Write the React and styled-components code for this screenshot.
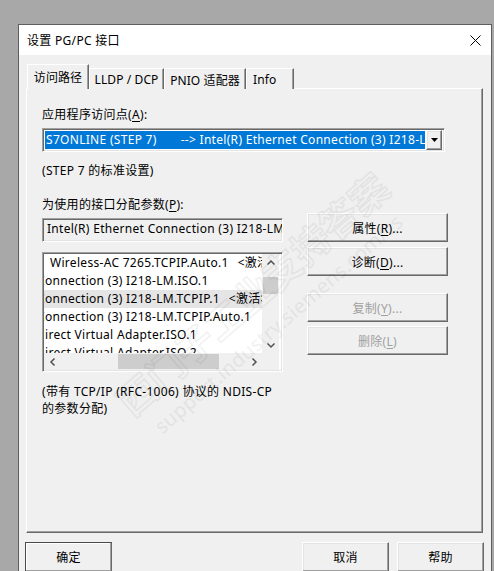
import React from "react";
import styled, { createGlobalStyle } from "styled-components";

const GlobalStyle = createGlobalStyle`
    html, body {
        margin: 0;
        padding: 0;
    }
    body {
        background: #a8a8a8;
        color: #000;
        font-family: "Noto Sans", "Noto Sans CJK SC", sans-serif;
        font-size: 12px;
        letter-spacing: 0.3px;
    }
    * {
        box-sizing: border-box;
    }
`;

const rows = [
    { text: "Wireless-AC 7265.TCPIP.Auto.1", tag: "<激活>", shift: 6 },
    { text: "Connection (3) I218-LM.ISO.1", shift: -7 },
    { text: "Connection (3) I218-LM.TCPIP.1", tag: "<激活>", shift: -7, selected: true },
    { text: "Connection (3) I218-LM.TCPIP.Auto.1", shift: -7 },
    { text: "irect Virtual Adapter.ISO.1", shift: 1 },
    { text: "irect Virtual Adapter.ISO.2", shift: 1 },
];

const Chevron = ({ dir }) => {
    const d = {
        up: "M0.5 5.5 L4 2 L7.5 5.5",
        down: "M0.5 2.5 L4 6 L7.5 2.5",
        left: "M5.5 0.5 L2 4 L5.5 7.5",
        right: "M2.5 0.5 L6 4 L2.5 7.5",
    }[dir];
    return (
        <svg width="8" height="8" viewBox="0 0 8 8">
            <path d={d} fill="none" stroke="#505050" strokeWidth="1.5" />
        </svg>
    );
};

const App = () => {
    return (
        <Screen>
            <GlobalStyle />
            <Dialog>
                <TitleBar>
                    <span>设置 PG/PC 接口</span>
                    <svg width="11" height="11" viewBox="0 0 11 11">
                        <path d="M0.5 0.5 L10.5 10.5 M10.5 0.5 L0.5 10.5" stroke="#000" strokeWidth="1" />
                    </svg>
                </TitleBar>
                <Body>
                    <TabStrip>
                        <Tab $active $w={62}>访问路径</Tab>
                        <Tab $w={75}>LLDP / DCP</Tab>
                        <Tab $w={82}>PNIO 适配器</Tab>
                        <Tab $w={48} $left>Info</Tab>
                    </TabStrip>
                    <Panel>
                        <Label>
                            应用程序访问点(<u>A</u>):
                        </Label>
                        <Combo>
                            <ComboValue>S7ONLINE (STEP 7)&nbsp;&nbsp;&nbsp;&nbsp;&nbsp;&nbsp;&nbsp;--&gt; Intel(R) Ethernet Connection (3) I218-LM</ComboValue>
                            <DropButton>
                                <svg width="7" height="4" viewBox="0 0 7 4">
                                    <path d="M0 0 L7 0 L3.5 4 Z" fill="#000" />
                                </svg>
                            </DropButton>
                        </Combo>
                        <Note>(STEP 7 的标准设置)</Note>
                        <Label $top={18}>
                            为使用的接口分配参数(<u>P</u>):
                        </Label>
                        <Split>
                            <LeftCol>
                                <TextField>Intel(R) Ethernet Connection (3) I218-LM.</TextField>
                                <ListBox>
                                    <Rows>
                                        {rows.map((r, i) => (
                                            <Row key={i} $selected={r.selected} $shift={r.shift}>
                                                {r.text}
                                                {r.tag && <Tag>{r.tag}</Tag>}
                                            </Row>
                                        ))}
                                    </Rows>
                                    <VScroll>
                                        <ArrowBox>
                                            <Chevron dir="up" />
                                        </ArrowBox>
                                        <VTrack>
                                            <VThumb />
                                        </VTrack>
                                        <ArrowBox>
                                            <Chevron dir="down" />
                                        </ArrowBox>
                                    </VScroll>
                                    <HScroll>
                                        <ArrowBox>
                                            <Chevron dir="left" />
                                        </ArrowBox>
                                        <HTrack>
                                            <HThumb />
                                        </HTrack>
                                        <ArrowBox>
                                            <Chevron dir="right" />
                                        </ArrowBox>
                                    </HScroll>
                                    <Corner />
                                </ListBox>
                            </LeftCol>
                            <RightCol>
                                <SideButton>
                                    属性(<u>R</u>)...
                                </SideButton>
                                <SideButton $top={5}>
                                    诊断(<u>D</u>)...
                                </SideButton>
                                <SideButton $top={17} disabled>
                                    复制(<u>Y</u>)...
                                </SideButton>
                                <SideButton $top={4} disabled>
                                    删除(<u>L</u>)
                                </SideButton>
                            </RightCol>
                        </Split>
                        <Footnote>
                            (带有 TCP/IP (RFC-1006) 协议的 NDIS-CP
                            <br />
                            的参数分配)
                        </Footnote>
                    </Panel>
                    <Footer>
                        <DialogButton $default>确定</DialogButton>
                        <RightButtons>
                            <DialogButton>取消</DialogButton>
                            <DialogButton>帮助</DialogButton>
                        </RightButtons>
                    </Footer>
                </Body>
            </Dialog>
            <Watermark>
                <WatermarkBig>西门子工业支持答案</WatermarkBig>
                <WatermarkSmall>support.industry.siemens.com/cs</WatermarkSmall>
            </Watermark>
        </Screen>
    );
};

const Screen = styled.div`
    height: 100vh;
    overflow: hidden;
    padding: 24px 0 0 18px;
    position: relative;
`;
const Dialog = styled.div`
    background: #f0f0f0;
    border: 1px solid #5e5e5e;
    display: flex;
    flex-direction: column;
    height: 570px;
    width: 474px;
`;
const TitleBar = styled.div`
    align-items: center;
    background: #fff;
    display: flex;
    height: 30px;
    justify-content: space-between;
    padding: 0 10px 0 8px;
`;
const Body = styled.div`
    display: flex;
    flex-direction: column;
    padding: 9px 8px 0 7px;
`;
const TabStrip = styled.div`
    align-items: flex-end;
    display: flex;
    height: 25px;
    margin-bottom: -1px;
    padding-left: 1px;
    position: relative;
    z-index: 1;
`;
const Tab = styled.div`
    align-items: center;
    background: #f0f0f0;
    border-left: 1px solid #fff;
    border-right: 1px solid #696969;
    border-top: 1px solid #fff;
    box-shadow: inset -1px 0 #a0a0a0;
    display: flex;
    height: ${(p) => (p.$active ? 25 : 21)}px;
    justify-content: ${(p) => (p.$left ? "flex-start" : "center")};
    letter-spacing: 0.1px;
    padding: ${(p) => (p.$left ? "0 0 0 6px" : "0")};
    padding-top: ${(p) => (p.$active ? 0 : 1)}px;
    white-space: nowrap;
    width: ${(p) => p.$w}px;
`;
const Panel = styled.div`
    border-bottom: 1px solid #696969;
    border-left: 1px solid #fff;
    border-right: 1px solid #696969;
    border-top: 1px solid #fff;
    box-shadow: inset -1px -1px #a0a0a0;
    display: flex;
    flex-direction: column;
    height: 445px;
    padding: 18px 0 0 15px;
    width: 457px;
`;
const Label = styled.div`
    line-height: 16px;
    margin-top: ${(p) => p.$top || 0}px;
    u {
        text-underline-offset: 2px;
    }
`;
const Sunken = styled.div`
    border-bottom: 1px solid #fff;
    border-left: 1px solid #a0a0a0;
    border-right: 1px solid #fff;
    border-top: 1px solid #a0a0a0;
    box-shadow: inset 1px 1px #696969, inset -1px -1px #e3e3e3;
`;
const Combo = styled(Sunken)`
    background: #fff;
    display: flex;
    height: 24px;
    margin-top: 5px;
    padding: 2px;
    width: 403px;
`;
const ComboValue = styled.div`
    background: #0078d7;
    color: #fff;
    flex: 1;
    line-height: 17px;
    overflow: hidden;
    padding-left: 1px;
    white-space: nowrap;
`;
const Raised = styled.div`
    background: #f0f0f0;
    border-bottom: 1px solid #696969;
    border-left: 1px solid #fff;
    border-right: 1px solid #696969;
    border-top: 1px solid #fff;
    box-shadow: inset -1px -1px #a0a0a0, inset 1px 1px #e3e3e3;
`;
const DropButton = styled(Raised)`
    align-items: center;
    display: flex;
    justify-content: center;
    margin: -1px 0 -1px 1px;
    width: 16px;
`;
const Note = styled.div`
    line-height: 16px;
    margin-top: 11px;
`;
const Split = styled.div`
    display: flex;
    gap: 24px;
`;
const LeftCol = styled.div`
    display: flex;
    flex-direction: column;
    width: 241px;
`;
const TextField = styled(Sunken)`
    height: 24px;
    line-height: 20px;
    margin-top: 5px;
    overflow: hidden;
    padding-left: 4px;
    white-space: nowrap;
`;
const ListBox = styled(Sunken)`
    background: #fff;
    display: grid;
    grid-template-columns: 218px 17px;
    grid-template-rows: 99px 17px;
    height: 120px;
    margin-top: 10px;
    padding: 1px;
`;
const Rows = styled.div`
    min-width: 0;
    overflow: hidden;
`;
const Row = styled.div`
    background: ${(p) => (p.$selected ? "#e5e5e5" : "transparent")};
    height: 18px;
    line-height: 18px;
    overflow: hidden;
    text-indent: ${(p) => p.$shift}px;
    white-space: nowrap;
`;
const Tag = styled.span`
    margin-left: 9px;
`;
const VScroll = styled.div`
    background: #f0f0f0;
    display: flex;
    flex-direction: column;
`;
const HScroll = styled.div`
    background: #f0f0f0;
    display: flex;
    min-width: 0;
`;
const ArrowBox = styled.div`
    align-items: center;
    display: flex;
    flex: 0 0 17px;
    height: 17px;
    justify-content: center;
    width: 17px;
`;
const VTrack = styled.div`
    flex: 1;
    padding: 6px 1px 0;
`;
const VThumb = styled.div`
    background: #cdcdcd;
    height: 17px;
`;
const HTrack = styled.div`
    flex: 1;
    padding: 1px 0 1px 57px;
`;
const HThumb = styled.div`
    background: #cdcdcd;
    height: 15px;
    width: 101px;
`;
const Corner = styled.div`
    background: #f0f0f0;
`;
const RightCol = styled.div`
    display: flex;
    flex-direction: column;
    width: 141px;
`;
const SideButton = styled.button`
    background: #f0f0f0;
    border-bottom: 1px solid #696969;
    border-left: 1px solid #fff;
    border-right: 1px solid #696969;
    border-top: 1px solid #fff;
    box-shadow: inset -1px -1px #a0a0a0, inset 1px 1px #e3e3e3;
    color: ${(p) => (p.disabled ? "#a0a0a0" : "#000")};
    font: inherit;
    height: 29px;
    letter-spacing: inherit;
    margin-top: ${(p) => p.$top || 0}px;
    padding: 0;
    u {
        text-underline-offset: 2px;
    }
`;
const Footnote = styled.div`
    line-height: 17px;
    margin-top: 11px;
`;
const Footer = styled.div`
    display: flex;
    justify-content: space-between;
    margin-top: 9px;
`;
const RightButtons = styled.div`
    display: flex;
    gap: 8px;
    margin-right: -1px;
`;
const DialogButton = styled.button`
    background: #f0f0f0;
    border: 1px solid ${(p) => (p.$default ? "#4a4a4a" : "#fff")};
    border-bottom-color: #696969;
    border-right-color: #696969;
    box-shadow: inset -1px -1px #a0a0a0, inset 1px 1px ${(p) => (p.$default ? "#fff" : "#e3e3e3")};
    color: #000;
    font: inherit;
    height: 30px;
    letter-spacing: inherit;
    margin-left: ${(p) => (p.$default ? -1 : 0)}px;
    padding: 0;
    width: 87px;
`;
const Watermark = styled.div`
    align-items: center;
    display: flex;
    flex-direction: column;
    left: 88px;
    opacity: 0.05;
    pointer-events: none;
    position: absolute;
    top: 262px;
    transform: rotate(-41deg);
`;
const WatermarkBig = styled.div`
    color: transparent;
    font-size: 38px;
    font-weight: 700;
    -webkit-text-stroke: 1.5px #000;
    white-space: nowrap;
`;
const WatermarkSmall = styled.div`
    color: #000;
    font-size: 20px;
    white-space: nowrap;
`;

export default App;
